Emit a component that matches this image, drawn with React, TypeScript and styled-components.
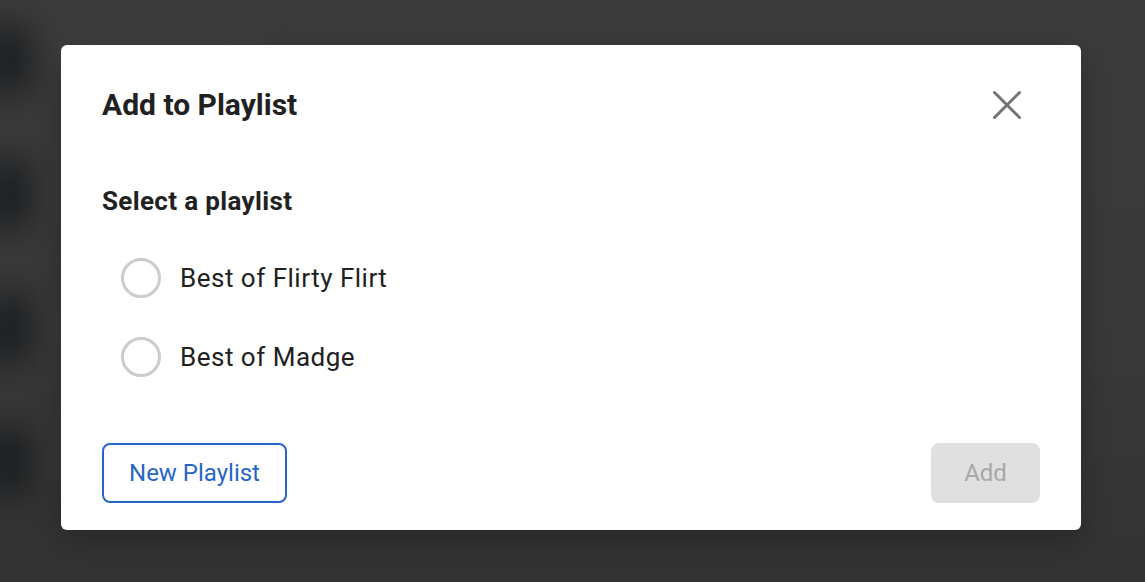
import { useState } from 'react';
import styled, { createGlobalStyle } from 'styled-components';

const GlobalStyle = createGlobalStyle`
	html, body {
		margin: 0;
		padding: 0;
		width: 100%;
		height: 100%;
		overflow: hidden;
	}
	body {
		font-family: Roboto, 'Noto Sans', 'Liberation Sans', sans-serif;
		color: #212121;
	}
`;

const Colors = {
	text: '#212121',
	muted: '#737373',
	radio: '#cccccc',
	primary: '#2866c6',
	disabledBg: '#e0e0e0',
	disabledFg: '#a8a8a8',
} as const;

const PLAYLISTS = ['Best of Flirty Flirt', 'Best of Madge'];

const Page = styled.div`
	position: relative;
	width: 1145px;
	height: 582px;
	overflow: hidden;
	background: linear-gradient(180deg, #3b3b3b 0%, #393939 55%, #333333 100%);
`;

const BlurredList = styled.div`
	display: flex;
	flex-direction: column;
	gap: 66px;
	padding-top: 26px;
	filter: blur(18px);
`;

const BlurredRow = styled.div`
	display: flex;
	align-items: center;
	gap: 30px;
`;

const BlurredThumb = styled.div`
	width: 38px;
	height: 68px;
	margin-left: -10px;
	border-radius: 10px;
	background: #15181b;
`;

const BlurredText = styled.div`
	width: 200px;
	height: 14px;
	border-radius: 7px;
	background: #4a4a4a;
`;

const Overlay = styled.div`
	position: absolute;
	inset: 0;
	display: flex;
	align-items: flex-start;
	padding: 45px 0 0 61px;
`;

const Dialog = styled.div`
	width: 1020px;
	height: 485px;
	box-sizing: border-box;
	padding: 40px 41px 27px;
	background: #ffffff;
	border-radius: 6px;
	box-shadow: 0 12px 30px rgba(0, 0, 0, 0.25);
	display: flex;
	flex-direction: column;
`;

const Header = styled.div`
	display: flex;
	align-items: center;
	justify-content: space-between;
	height: 40px;
`;

const Title = styled.h2`
	margin: 0;
	font-size: 30px;
	line-height: 40px;
	font-weight: 700;
	color: ${Colors.text};
`;

const CloseButton = styled.button`
	display: flex;
	align-items: center;
	justify-content: center;
	width: 40px;
	height: 40px;
	margin-right: 13px;
	padding: 0;
	border: none;
	background: none;
	color: ${Colors.muted};
	cursor: pointer;
`;

const SubHeading = styled.h3`
	margin: 60px 0 0;
	font-size: 26px;
	line-height: 32px;
	font-weight: 700;
	letter-spacing: 0.35px;
	color: ${Colors.text};
`;

const Options = styled.div`
	display: flex;
	flex-direction: column;
	gap: 39px;
	margin-top: 41px;
	padding-left: 19px;
`;

const Option = styled.label`
	display: flex;
	align-items: center;
	gap: 19px;
	height: 40px;
	cursor: pointer;
`;

const RadioInput = styled.input.attrs({ type: 'radio' })`
	appearance: none;
	margin: 0;
	width: 40px;
	height: 40px;
	box-sizing: border-box;
	border: 3px solid ${Colors.radio};
	border-radius: 50%;
	background: #fff;
	cursor: pointer;

	&:checked {
		border-color: ${Colors.primary};
		box-shadow: inset 0 0 0 7px #fff;
		background: ${Colors.primary};
	}
`;

const OptionLabel = styled.span`
	font-size: 26px;
	line-height: 32px;
	letter-spacing: 0.5px;
	color: ${Colors.text};
`;

const Footer = styled.div`
	display: flex;
	align-items: center;
	justify-content: space-between;
	margin-top: auto;
`;

const Button = styled.button<{ $variant: 'outline' | 'solid' }>`
	height: 60px;
	box-sizing: border-box;
	border-radius: 8px;
	font-family: inherit;
	font-size: 24px;
	font-weight: 400;
	cursor: pointer;
	border: 2px solid
		${({ $variant }) => ($variant === 'outline' ? Colors.primary : Colors.disabledBg)};
	background: ${({ $variant }) => ($variant === 'outline' ? '#fff' : Colors.disabledBg)};
	color: ${({ $variant }) => ($variant === 'outline' ? Colors.primary : Colors.disabledFg)};

	&:disabled {
		cursor: default;
	}
`;

const NewButton = styled(Button)`
	width: 185px;
`;

const AddButton = styled(Button)`
	width: 109px;
`;

const CloseIcon = () => (
	<svg width="32" height="32" viewBox="0 0 32 32" fill="none">
		<path
			d="M3.5 3.5L28.5 28.5M28.5 3.5L3.5 28.5"
			stroke="currentColor"
			strokeWidth="3"
			strokeLinecap="round"
		/>
	</svg>
);

export default function App() {
	const [selected, setSelected] = useState<string | null>(null);

	return (
		<Page>
			<GlobalStyle />
			<BlurredList>
				{[0, 1, 2, 3].map((i) => (
					<BlurredRow key={i}>
						<BlurredThumb />
						<BlurredText />
					</BlurredRow>
				))}
			</BlurredList>
			<Overlay>
				<Dialog role="dialog" aria-label="Add to Playlist">
					<Header>
						<Title>Add to Playlist</Title>
						<CloseButton aria-label="Close">
							<CloseIcon />
						</CloseButton>
					</Header>
					<SubHeading>Select a playlist</SubHeading>
					<Options>
						{PLAYLISTS.map((name) => (
							<Option key={name}>
								<RadioInput
									name="playlist"
									checked={selected === name}
									onChange={() => setSelected(name)}
								/>
								<OptionLabel>{name}</OptionLabel>
							</Option>
						))}
					</Options>
					<Footer>
						<NewButton $variant="outline">New Playlist</NewButton>
						<AddButton $variant="solid" disabled={!selected}>
							Add
						</AddButton>
					</Footer>
				</Dialog>
			</Overlay>
		</Page>
	);
}
